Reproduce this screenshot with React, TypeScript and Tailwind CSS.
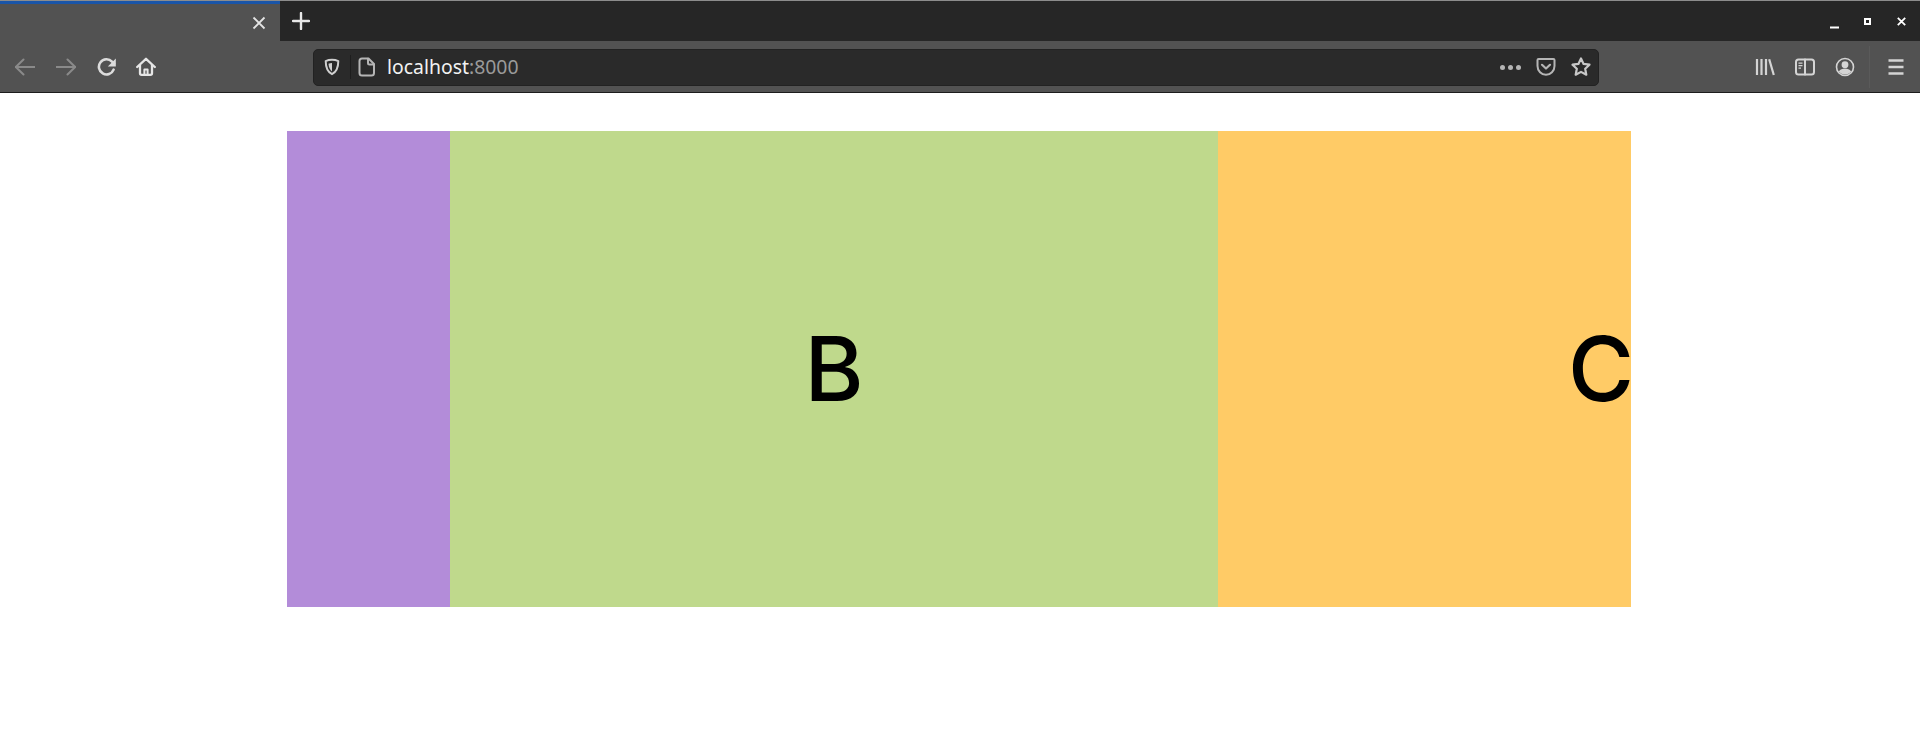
import type { ReactNode } from "react";

// small wrapper so every toolbar glyph shares stroke settings
const Icon = ({ children, className = "" }: { children: ReactNode; className?: string }) => (
  <svg
    viewBox="0 0 20 20"
    fill="none"
    stroke="currentColor"
    strokeWidth="2"
    strokeLinecap="round"
    strokeLinejoin="round"
    className={`w-5 h-5 shrink-0 ${className}`}
  >
    {children}
  </svg>
);

const Back = ({ className }: { className?: string }) => (
  <Icon className={className}>
    <path d="M19.500 10H.5M8.500 2.500 .8 10l7.700 7.500" />
  </Icon>
);

const Forward = ({ className }: { className?: string }) => (
  <Icon className={className}>
    <path d="M.5 10h19M11.500 2.500l7.700 7.500-7.700 7.500" />
  </Icon>
);

const Reload = () => (
  <Icon className="text-[#dcdcdc]">
    <path strokeWidth="2.600" d="M16.600 12.600A7.600 7.600 0 1 1 15 4.600l2 2" />
    <path fill="currentColor" stroke="none" d="M18.800 1.400v8h-8z" />
  </Icon>
);

const Home = () => (
  <Icon className="text-[#e6e6e6]">
    <path strokeWidth="2.300" d="M1.200 10 10 1.800 18.800 10M4 8v8.200c0 1 .6 1.600 1.600 1.600h8.800c1 0 1.600-.6 1.600-1.600V8" />
    <path strokeWidth="2" d="M8.400 17.600v-5h3.200v5" />
  </Icon>
);

const Shield = () => (
  <Icon className="w-[18px] h-[18px] text-[#cfcfcf]">
    <path strokeWidth="2.200" d="M10 2c2.600 0 5 .5 7 1.400 0 7-1.800 12-7 14.600C4.800 15.400 3 10.400 3 3.400 5 2.500 7.400 2 10 2z" />
    <path fill="currentColor" stroke="none" d="M10 5.500v9.500c-2-1.500-3.600-4.500-3.900-8.700 1.200-.5 2.500-.8 3.900-.8z" />
  </Icon>
);

const Page = () => (
  <Icon className="text-[#b5b5b5]">
    <path d="M5 1.500h6.500L17 7v9c0 1.500-1 2.500-2.500 2.500h-9.500C3.500 18.500 2.500 17.500 2.500 16V4C2.500 2.500 3.500 1.500 5 1.500z" />
    <path d="M11 1.800V6c0 1 .6 1.500 1.500 1.500h4.300" />
  </Icon>
);

const Pocket = () => (
  <Icon className="text-[#b5b5b5]">
    <path d="M2.600 2h14.800c.7 0 1.100.5 1.100 1.100V9c0 5-3.900 8.800-8.500 8.800S1.500 14 1.500 9V3.100C1.500 2.500 1.900 2 2.600 2z" />
    <path strokeWidth="2.200" d="m6 7.800 4 3.700 4-3.700" />
  </Icon>
);

const Star = () => (
  <Icon className="text-[#c8c8c8]">
    <path strokeWidth="2.200" d="m10 1.500 2.600 5.400 5.900.8-4.300 4.100 1.100 5.900-5.300-2.800-5.300 2.800 1.100-5.900-4.300-4.100 5.900-.8z" />
  </Icon>
);

const Library = () => (
  <Icon className="text-[#d4d4d4]">
    <path strokeLinecap="butt" strokeWidth="2.200" d="M2 2v16M6.500 2v16M11 2v16M14.200 2.200 18.800 18" />
  </Icon>
);

const Sidebar = () => (
  <Icon className="text-[#d4d4d4]">
    <rect x="1" y="2.500" width="18" height="15" rx="2.500" />
    <path d="M10 2.500v15" />
    <path strokeWidth="1.300" strokeLinecap="butt" d="M3.500 6.200h4M3.500 8.700h4M3.500 11.200h2.500" />
  </Icon>
);

const Account = () => (
  <Icon className="text-[#d4d4d4]">
    <circle cx="10" cy="10" r="8.500" strokeWidth="1.600" />
    <circle cx="10" cy="7.700" r="3.400" fill="currentColor" stroke="none" />
    <path fill="currentColor" stroke="none" d="M3.800 14.500c1.500-2.200 3.700-3 6.200-3s4.700.8 6.200 3c-1.500 2-3.700 3-6.200 3s-4.700-1-6.200-3z" />
  </Icon>
);

const Menu = () => (
  <Icon className="text-[#d4d4d4]">
    <path strokeLinecap="butt" strokeWidth="2.400" d="M2.500 3.500h15M2.500 10h15M2.500 16.500h15" />
  </Icon>
);

const Browser = () => (
  <header className="bg-[#525252] font-['Noto_Sans',sans-serif]">
    <div className="h-[41px] flex bg-[#262626] border-t border-[#8c8c8c]">
      <div className="w-[280px] bg-[#525252] border-t-[3px] border-[#1a55a8] flex items-center justify-end pr-[14px]">
        <svg viewBox="0 0 14 14" className="w-3.5 h-3.5 text-[#e4e4e4]" fill="none" stroke="currentColor" strokeWidth="1.800">
          <path d="m1.500 1.500 11 11M12.500 1.500l-11 11" />
        </svg>
      </div>
      <div className="flex items-center pl-3">
        <svg viewBox="0 0 18 18" className="w-[18px] h-[18px] text-[#e8e8e8]" fill="none" stroke="currentColor" strokeWidth="2.400" strokeLinecap="round">
          <path d="M9 1v16M1 9h16" />
        </svg>
      </div>
      <div className="ml-auto flex items-center gap-[25px] pr-[14px] text-white">
        <svg viewBox="0 0 9 9" className="w-[9px] h-[9px] translate-y-[3px] -translate-x-[1px]" fill="currentColor">
          <rect x="0" y="6.500" width="9" height="2" />
        </svg>
        <svg viewBox="0 0 7 7" className="w-[7px] h-[7px] -translate-x-[1px]" fill="none" stroke="currentColor" strokeWidth="2">
          <rect x="1" y="1" width="5" height="5" />
        </svg>
        <svg viewBox="0 0 9 9" className="w-[9px] h-[9px]" fill="none" stroke="currentColor" strokeWidth="1.800">
          <path d="m.8.800 7.400 7.400M8.200.800.8 8.200" />
        </svg>
      </div>
    </div>
    <div className="h-[52px] flex items-center pt-[1px] pl-[15px] pr-[14px] border-b border-[#1c1c1c]">
      <Back className="text-[#8a8a8a]" />
      <Forward className="text-[#8a8a8a] ml-[21px]" />
      <div className="ml-[21px]"><Reload /></div>
      <div className="ml-[19px]"><Home /></div>
      <div className="ml-[157px] w-[1286px] h-[37px] rounded-[5px] bg-[#2a2a2a] border border-[#222222] flex items-center pl-[9px] pr-[7px]">
        <Shield />
        <div className="w-px h-6 bg-[#1d1d1d] ml-[9px]" />
        <div className="ml-[6px]"><Page /></div>
        <span className="ml-[10px] text-[19.4px] leading-none text-[#f2f2f2]">
          localhost<span className="text-[#9a9a9a]">:8000</span>
        </span>
        <div className="ml-auto flex items-center gap-[15px]">
          <div className="flex gap-[3px]">
            <span className="w-[5px] h-[5px] rounded-full bg-[#b5b5b5]" />
            <span className="w-[5px] h-[5px] rounded-full bg-[#b5b5b5]" />
            <span className="w-[5px] h-[5px] rounded-full bg-[#b5b5b5]" />
          </div>
          <Pocket />
          <Star />
        </div>
      </div>
      <div className="ml-auto flex items-center">
        <Library />
        <div className="ml-5"><Sidebar /></div>
        <div className="ml-5"><Account /></div>
        <div className="w-px h-[42px] bg-[#5a5a5a] ml-[14px]" />
        <div className="ml-[16px]"><Menu /></div>
      </div>
    </div>
  </header>
);

export default function App() {
  return (
    <div className="w-full h-[729px] bg-white overflow-hidden">
      <Browser />
      <main className="pt-[38px] pl-[287px]">
        <div className="flex w-[1344px] h-[476px] font-['Inter',sans-serif] font-medium text-[90px] leading-none text-black overflow-hidden">
          <div className="w-[163px] bg-[#b38cd9]" />
          <div className="w-[768px] bg-[#bfd98c] flex items-center justify-center">B</div>
          <div className="w-[413px] bg-[#ffcb66] flex items-center justify-end">
            <span className="-mr-[3px]">C</span>
          </div>
        </div>
      </main>
    </div>
  );
}
